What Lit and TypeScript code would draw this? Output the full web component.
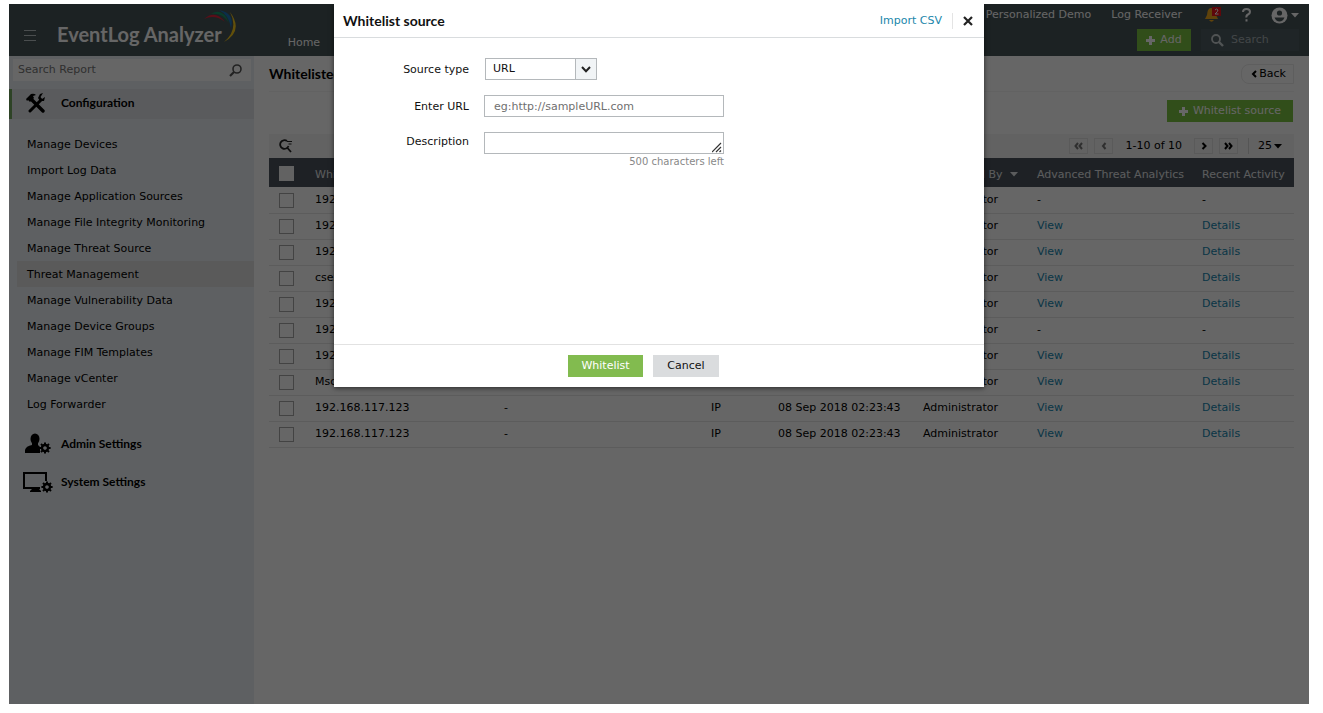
import { LitElement, html, css, svg } from "lit";
import { customElement, property, state } from "lit/decorators.js";

interface SourceRow {
  source: string;
  type: string;
  added: string;
  by: string;
  tracked: boolean;
}

const STAMP = "08 Sep 2018 02:23:43";
const row = (source: string, tracked = true, type = "IP"): SourceRow => ({
  source,
  type,
  added: STAMP,
  by: "Administrator",
  tracked,
});

const ROWS: SourceRow[] = [
  row("192.168.117.123", false),
  row("192.168.117.123"),
  row("192.168.117.123"),
  row("csez.com", true, "URL"),
  row("192.168.117.123"),
  row("192.168.117.123", false),
  row("192.168.117.123"),
  row("Msc.com", true, "URL"),
  row("192.168.117.123"),
  row("192.168.117.123"),
];

const MENU = [
  "Manage Devices",
  "Import Log Data",
  "Manage Application Sources",
  "Manage File Integrity Monitoring",
  "Manage Threat Source",
  "Threat Management",
  "Manage Vulnerability Data",
  "Manage Device Groups",
  "Manage FIM Templates",
  "Manage vCenter",
  "Log Forwarder",
];

const gear = (cx: number, cy: number) => svg`
  <g transform="translate(${cx} ${cy})" stroke="currentColor">
    <circle r="3" fill="none" stroke-width="2.4"></circle>
    <path stroke-width="2" d="M0-3.600V-5.600M0 3.600V5.600M-3.600 0H-5.600M3.600 0H5.600M-2.600-2.600-4-4M2.600 2.600 4 4M-2.600 2.600-4 4M2.600-2.600 4-4"></path>
  </g>`;

const plus = html`<svg width="9" height="9" viewBox="0 0 9 9" aria-hidden="true">
  <path d="M4.500 0V9M0 4.500H9" stroke="currentColor" stroke-width="3"></path>
</svg>`;

const caret = html`<svg width="8" height="5" viewBox="0 0 8 5" aria-hidden="true">
  <path d="M0 0H8L4 4.500Z" fill="currentColor"></path>
</svg>`;

const chevron = (d: string, w = 6) => html`<svg width=${w} height="8" viewBox="0 0 ${w} 8" aria-hidden="true">
  <path d=${d} fill="none" stroke="currentColor" stroke-width="2"></path>
</svg>`;

const base = css`
  * {
    box-sizing: border-box;
  }
  button,
  input,
  select,
  textarea {
    font: inherit;
    color: inherit;
    margin: 0;
    border-radius: 0;
  }
  button {
    cursor: pointer;
    border: 0;
    padding: 0;
    background: none;
  }
  a {
    text-decoration: none;
    color: inherit;
  }
  svg {
    display: block;
    flex: none;
  }
`;

@customElement("app-header")
class AppHeader extends LitElement {
  static styles = [
    base,
    css`
      :host {
        display: flex;
        justify-content: space-between;
        height: 52px;
        background: #475558;
        color: #fff;
      }
      .left {
        display: flex;
        align-items: flex-start;
      }
      .menu {
        padding: 26px 21px 0 15px;
      }
      .brand {
        display: flex;
        padding-top: 6px;
        font: 700 20px/48px Lato, sans-serif;
        white-space: nowrap;
      }
      .swoosh {
        margin-left: -18px;
      }
      .home {
        padding: 31px 0 0 46px;
        line-height: 16px;
      }
      .right {
        display: flex;
        flex-direction: column;
        align-items: flex-end;
        padding-right: 10px;
        gap: 3px;
      }
      .links {
        display: flex;
        align-items: center;
        height: 22px;
        gap: 20px;
      }
      .alerts {
        padding-left: 2px;
      }
      .account {
        display: flex;
        align-items: center;
        gap: 3px;
      }
      .tools {
        display: flex;
        gap: 10px;
      }
      .add {
        display: flex;
        align-items: center;
        justify-content: center;
        gap: 5px;
        width: 54px;
        height: 22px;
        background: #7cc242;
      }
      .search {
        display: flex;
        align-items: center;
        gap: 7px;
        width: 98px;
        height: 22px;
        padding: 0 10px;
        background: #4f5d61;
      }
      .search input {
        width: 50px;
        border: 0;
        padding: 0;
        background: none;
      }
      .search input::placeholder {
        color: #a6b0b4;
      }
    `,
  ];
  render() {
    return html`
      <div class="left">
        <button class="menu" aria-label="Menu">
          <svg width="12" height="11" viewBox="0 0 12 11"><path d="M0 .5H12M0 5.500H12M0 10.500H12" stroke="#b9c2c5"></path></svg>
        </button>
        <div class="brand">
          <span>EventLog Analyzer</span>
          <svg class="swoosh" width="38" height="36" viewBox="0 0 38 36" aria-hidden="true">
            <path d="M0 9Q11-1 21 12Q11 4 0 9Z" fill="#e0243c"></path>
            <path d="M7 4Q19-3 25 13Q18 2 7 4Z" fill="#17966a"></path>
            <path d="M15 0Q31 3 27 18Q25 5 15 0Z" fill="#1c75bc"></path>
            <path d="M26 2Q40 21 20 32Q35 19 26 2Z" fill="#f4c81b"></path>
          </svg>
        </div>
        <a class="home" href="#">Home</a>
      </div>
      <div class="right">
        <div class="links">
          <a href="#">Personalized Demo</a>
          <a href="#">Log Receiver</a>
          <button class="alerts" aria-label="Notifications">
            <svg width="18" height="16" viewBox="0 0 18 16">
              <path d="M7 1C3.500 1.500 3.500 5 3 8L1 12H14L12 8C11.500 4 11 1.500 7 1Z" fill="#f0a81c"></path>
              <path d="M5 13H10Q7.500 16.500 5 13Z" fill="#f0a81c"></path>
              <rect x="8" width="9" height="9" fill="#e8141c"></rect>
              <path d="M11 3Q12.500 1 14 3Q14 4.500 11 7H14.500" fill="none" stroke="#fff"></path>
            </svg>
          </button>
          <button aria-label="Help">
            <svg width="9" height="14" viewBox="0 0 9 14">
              <path d="M1 4Q1 1 4.500 1T8 4Q8 5.500 6 6.500T4.500 9.500M4.500 11.300V13.500" fill="none" stroke="#fff" stroke-width="2"></path>
            </svg>
          </button>
          <button class="account" aria-label="Account">
            <svg width="17" height="17" viewBox="0 0 17 17">
              <circle cx="8.500" cy="8.500" r="8" fill="#fff"></circle>
              <circle cx="8.500" cy="6" r="2.600" fill="#475558"></circle>
              <path d="M3.500 10.500H13.500Q12 14.500 8.500 14.500T3.500 10.500Z" fill="#475558"></path>
            </svg>
            ${caret}
          </button>
        </div>
        <div class="tools">
          <button class="add">${plus} Add</button>
          <label class="search">
            <svg width="13" height="13" viewBox="0 0 13 13" aria-hidden="true">
              <circle cx="5" cy="5" r="4" fill="none" stroke="#c9d0d2" stroke-width="1.800"></circle>
              <path d="M8 8 12 12" stroke="#c9d0d2" stroke-width="2.400"></path>
            </svg>
            <input type="text" placeholder="Search" aria-label="Search" />
          </label>
        </div>
      </div>
    `;
  }
}

@customElement("app-sidebar")
class AppSidebar extends LitElement {
  static styles = [
    base,
    css`
      :host {
        display: block;
        width: 245px;
        flex: none;
        background: #ecf0f4;
      }
      .search {
        display: flex;
        align-items: center;
        justify-content: space-between;
        height: 22px;
        margin: 3px 3px 8px 4px;
        padding: 0 9px 0 5px;
        background: #fff;
      }
      .search input {
        flex: 1;
        min-width: 0;
        border: 0;
        padding: 0;
        background: none;
      }
      .search input::placeholder {
        color: #777;
      }
      .section {
        display: flex;
        align-items: center;
        gap: 8px;
        height: 38px;
        padding-left: 14px;
        font: 700 12px/16px Lato, sans-serif;
      }
      .section.current {
        height: 30px;
        padding: 0 0 2px 11px;
        border-left: 3px solid #74a860;
        background: #e0e4e8;
      }
      .list {
        list-style: none;
        margin: 12px 0 8px;
        padding: 0 0 0 8px;
      }
      .item {
        display: block;
        padding: 2px 0 0 10px;
        line-height: 24px;
      }
      .item.active {
        background: #e0e0e0;
      }
    `,
  ];
  render() {
    return html`
      <label class="search">
        <input type="text" placeholder="Search Report" aria-label="Search Report" />
        <svg width="13" height="13" viewBox="0 0 13 13" aria-hidden="true">
          <circle cx="8" cy="5" r="4" fill="none" stroke="#555" stroke-width="1.600"></circle>
          <path d="M5 8 1 12" stroke="#555" stroke-width="2.200"></path>
        </svg>
      </label>
      <a class="section current" href="#">
        <svg width="30" height="20" viewBox="0 0 30 20" aria-hidden="true">
          <path d="M8 6 20 18" stroke="currentColor" stroke-width="3.400" stroke-linecap="round"></path>
          <path d="M18 7 7 18" stroke="currentColor" stroke-width="3" stroke-linecap="round"></path>
          <path d="M3 6 8 1Q11 0 13 2L10 3 11 5 7 9 5 7 4 8Z" fill="currentColor"></path>
          <path d="M20 0 17 1 15 5 17 8 21 8 22 4 19 6 17.500 4Z" fill="currentColor"></path>
        </svg>
        Configuration
      </a>
      <ul class="list">
        ${MENU.map(
          (m) => html`<li><a href="#" class="item ${m === "Threat Management" ? "active" : ""}">${m}</a></li>`
        )}
      </ul>
      <a class="section" href="#">
        <svg width="30" height="22" viewBox="0 0 30 22" aria-hidden="true">
          <ellipse cx="12" cy="6" rx="4.500" ry="5.500" fill="currentColor"></ellipse>
          <path d="M9 9H15V13H9Z" fill="currentColor"></path>
          <path d="M2 20V17Q3 13 9 12H15L17 14V20Z" fill="currentColor"></path>
          ${gear(22, 15)}
        </svg>
        Admin Settings
      </a>
      <a class="section" href="#">
        <svg width="30" height="22" viewBox="0 0 30 22" aria-hidden="true">
          <path d="M17 17H1V2H23V10" fill="none" stroke="currentColor" stroke-width="2"></path>
          <path d="M7 21V20L10 17H15L18 20V21Z" fill="currentColor"></path>
          ${gear(24, 16)}
        </svg>
        System Settings
      </a>
    `;
  }
}

@customElement("source-table")
class SourceTable extends LitElement {
  @property({ attribute: false }) rows: SourceRow[] = [];
  static styles = [
    base,
    css`
      :host {
        display: block;
      }
      .table {
        width: 100%;
        table-layout: fixed;
        border-collapse: collapse;
        white-space: nowrap;
      }
      .c-check { width: 46px; }
      .c-desc { width: 207px; }
      .c-type { width: 67px; }
      .c-date { width: 145px; }
      .c-by { width: 114px; }
      .c-ata { width: 165px; }
      .c-act { width: 92px; }
      .table th {
        height: 29px;
        padding: 4px 0 0;
        background: #4b545e;
        color: #e4e6e8;
        font-weight: 400;
        text-align: left;
      }
      .table td {
        height: 26px;
        padding: 0;
        border-bottom: 1px solid #e6e6e6;
      }
      .table .pick {
        padding: 1px 0 0 10px;
      }
      .box {
        appearance: none;
        display: block;
        width: 15px;
        height: 15px;
        border: 1px solid #a8a8a8;
      }
      .box.all {
        border-color: #f4f4f4;
        background: #f4f4f4;
      }
      .sort {
        display: flex;
        align-items: center;
        gap: 8px;
      }
      .link {
        color: #1787b0;
      }
    `,
  ];
  render() {
    return html`
      <table class="table">
        <colgroup>
          <col class="c-check" /><col /><col class="c-desc" /><col class="c-type" />
          <col class="c-date" /><col class="c-by" /><col class="c-ata" /><col class="c-act" />
        </colgroup>
        <thead>
          <tr>
            <th class="pick"><input class="box all" type="checkbox" aria-label="Select all" /></th>
            <th>Whitelisted Source</th>
            <th>Description</th>
            <th>Type</th>
            <th>Added Time</th>
            <th><button class="sort">Whitelisted By ${caret}</button></th>
            <th>Advanced Threat Analytics</th>
            <th>Recent Activity</th>
          </tr>
        </thead>
        <tbody>
          ${this.rows.map(
            (r) => html`<tr>
              <td class="pick"><input class="box" type="checkbox" aria-label="Select ${r.source}" /></td>
              <td>${r.source}</td>
              <td>-</td>
              <td>${r.type}</td>
              <td>${r.added}</td>
              <td>${r.by}</td>
              <td>${r.tracked ? html`<a class="link" href="#">View</a>` : "-"}</td>
              <td>${r.tracked ? html`<a class="link" href="#">Details</a>` : "-"}</td>
            </tr>`
          )}
        </tbody>
      </table>
    `;
  }
}

@customElement("whitelist-dialog")
class WhitelistDialog extends LitElement {
  @state() private used = 0;
  static styles = [
    base,
    css`
      :host {
        display: block;
        width: 650px;
        max-width: 100%;
        background: #fff;
        color: #111;
        box-shadow: 0 1px 5px rgba(0, 0, 0, 0.6);
        clip-path: inset(0 -8px -8px -8px);
      }
      .head {
        display: flex;
        align-items: center;
        height: 34px;
        padding: 0 11px 0 9px;
        border-bottom: 1px solid #d9dcde;
      }
      .title {
        flex: 1;
        margin: 0;
        font: 700 14px/20px Lato, sans-serif;
      }
      .import {
        padding-right: 10px;
        border-right: 1px solid #e4e4e4;
        margin-right: 10px;
        color: #1b87ab;
        line-height: 16px;
      }
      .form {
        display: grid;
        grid-template-columns: 135px minmax(0, 240px);
        grid-auto-rows: min-content;
        gap: 14px 15px;
        min-height: 306px;
        padding-top: 20px;
      }
      .label {
        text-align: right;
        line-height: 24px;
        height: 23px;
      }
      .label.top {
        line-height: 20px;
      }
      .pickbox {
        display: grid;
        width: 112px;
        height: 22px;
        margin-left: 1px;
      }
      .pickbox select {
        grid-area: 1 / 1;
        appearance: none;
        height: 22px;
        padding: 0 7px;
        border: 1px solid #b4b8bb;
        background: #fff;
      }
      .arrow {
        grid-area: 1 / 1;
        justify-self: end;
        display: grid;
        place-items: center;
        width: 22px;
        height: 22px;
        border: 1px solid #b4b8bb;
        background: #f1f4f6;
        pointer-events: none;
      }
      .text {
        width: 100%;
        height: 22px;
        padding: 1px 9px 0;
        border: 1px solid #b4b8bb;
        background: #fff;
      }
      .text::placeholder {
        color: #6f6f6f;
      }
      .area {
        display: grid;
      }
      .area textarea {
        grid-area: 1 / 1;
        display: block;
        resize: none;
        overflow: hidden;
      }
      .grip {
        grid-area: 1 / 1;
        place-self: end;
        padding: 0 1px 1px 0;
        pointer-events: none;
      }
      .count {
        margin: 0;
        text-align: right;
        font-size: 10px;
        line-height: 15px;
        color: #888;
      }
      .foot {
        display: flex;
        justify-content: center;
        gap: 10px;
        height: 43px;
        padding: 10px 31px 0 0;
        border-top: 1px solid #e2e2e2;
      }
      .btn {
        height: 22px;
        padding: 0;
      }
      .ok {
        width: 75px;
        background: #82bb4f;
        color: #fff;
      }
      .cancel {
        width: 66px;
        background: #dadcde;
      }
    `,
  ];
  private count(e: Event) {
    this.used = (e.target as HTMLTextAreaElement).value.length;
  }
  render() {
    return html`
      <header class="head">
        <h2 class="title">Whitelist source</h2>
        <a class="import" href="#">Import CSV</a>
        <button aria-label="Close">
          <svg width="10" height="10" viewBox="0 0 10 10"><path d="M1 1 9 9M9 1 1 9" stroke="#222" stroke-width="2.200"></path></svg>
        </button>
      </header>
      <form class="form">
        <label class="label" for="type">Source type</label>
        <div class="pickbox">
          <select id="type"><option>URL</option><option>IP</option></select>
          <span class="arrow">
            <svg width="10" height="7" viewBox="0 0 10 7" aria-hidden="true"><path d="M1 1 5 5.200 9 1" fill="none" stroke="#222" stroke-width="2"></path></svg>
          </span>
        </div>
        <label class="label" for="url">Enter URL</label>
        <input class="text" id="url" type="text" placeholder="eg:http://sampleURL.com" />
        <label class="label top" for="desc">Description</label>
        <div>
          <div class="area">
            <textarea class="text" id="desc" maxlength="500" @input=${this.count}></textarea>
            <svg class="grip" width="12" height="12" viewBox="0 0 11 11" aria-hidden="true">
              <path d="M0 10 9 1M4 10 9 5M7.500 10 9 8.500" stroke="#333" stroke-width="1.200"></path>
            </svg>
          </div>
          <p class="count">${500 - this.used} characters left</p>
        </div>
      </form>
      <footer class="foot">
        <button class="btn ok">Whitelist</button>
        <button class="btn cancel">Cancel</button>
      </footer>
    `;
  }
}

@customElement("app-root")
class AppRoot extends LitElement {
  static styles = [
    base,
    css`
      :host {
        display: flex;
        box-sizing: border-box;
        min-height: 100vh;
        padding: 4px 14px 9px 9px;
        background: #fff;
        color: #000;
        font: 11px/16px "DejaVu Sans", Verdana, sans-serif;
      }
      .app {
        position: relative;
        flex: 1;
        min-width: 0;
        display: flex;
        flex-direction: column;
      }
      .body {
        flex: 1;
        display: flex;
      }
      .main {
        flex: 1;
        min-width: 0;
        padding: 0 15px;
      }
      .top {
        display: flex;
        align-items: center;
        justify-content: space-between;
        height: 36px;
        border-bottom: 1px solid #f4f4f4;
      }
      .title {
        margin: 0;
        font: 700 14px/20px Lato, sans-serif;
      }
      .back {
        display: flex;
        align-items: center;
        gap: 2px;
        height: 20px;
        padding: 0 7px 0 9px;
        border: 1px solid #ebebeb;
        border-radius: 8px 0 0 8px;
      }
      .actions {
        display: flex;
        justify-content: flex-end;
        padding: 8px 1px 12px 0;
      }
      .create {
        display: flex;
        align-items: center;
        justify-content: center;
        gap: 5px;
        width: 126px;
        height: 22px;
        background: #7cc242;
        color: #fff;
      }
      .bar {
        display: flex;
        align-items: center;
        justify-content: space-between;
        height: 24px;
        padding: 0 12px 0 10px;
        background: #f4f4f4;
      }
      .pager {
        display: flex;
        align-items: center;
        gap: 6px;
      }
      .page {
        display: grid;
        place-items: center;
        width: 19px;
        height: 16px;
        border: 1px solid #e0e0e0;
      }
      .page.off {
        color: #777;
      }
      .range {
        padding: 0 6px;
      }
      .size {
        display: flex;
        align-items: center;
        gap: 2px;
        margin-left: 4px;
        padding-left: 9px;
        border-left: 1px solid #d4d4d4;
      }
      .overlay {
        position: absolute;
        inset: 0;
        display: flex;
        justify-content: center;
        align-items: flex-start;
        background: rgba(0, 0, 0, 0.6);
      }
    `,
  ];
  render() {
    return html`
      <div class="app">
        <app-header></app-header>
        <div class="body">
          <app-sidebar></app-sidebar>
          <main class="main">
            <div class="top">
              <h1 class="title">Whitelisted Sources</h1>
              <button class="back">${chevron("M5 1 2 4 5 7")} Back</button>
            </div>
            <div class="actions"><button class="create">${plus} Whitelist source</button></div>
            <div class="bar">
              <button aria-label="Filter">
                <svg width="14" height="14" viewBox="0 0 14 14">
                  <path d="M8 2A4.300 4.300 0 1 0 9.500 7M8.500 9 12 13" fill="none" stroke="#222" stroke-width="1.800"></path>
                  <path d="M8 2.500H13M9.500 5H12.500" stroke="#222" stroke-width="1.200"></path>
                </svg>
              </button>
              <div class="pager">
                <button class="page off" aria-label="First">${chevron("M4 1 1.500 4 4 7M8 1 5.500 4 8 7", 9)}</button>
                <button class="page off" aria-label="Previous">${chevron("M4.500 1 2 4 4.500 7")}</button>
                <span class="range">1-10 of 10</span>
                <button class="page" aria-label="Next">${chevron("M1.500 1 4.500 4 1.500 7")}</button>
                <button class="page" aria-label="Last">${chevron("M1 1 3.500 4 1 7M5 1 7.500 4 5 7", 9)}</button>
                <button class="size">25 ${caret}</button>
              </div>
            </div>
            <source-table .rows=${ROWS}></source-table>
          </main>
        </div>
        <div class="overlay"><whitelist-dialog role="dialog" aria-label="Whitelist source"></whitelist-dialog></div>
      </div>
    `;
  }
}
